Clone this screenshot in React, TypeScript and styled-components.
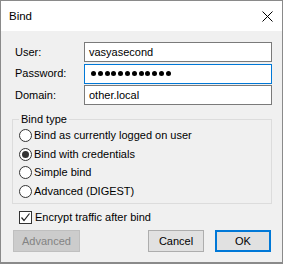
import React from "react";
import styled, { createGlobalStyle } from "styled-components";

const GlobalStyle = createGlobalStyle`
  html, body { margin: 0; padding: 0; background: #3b3f46; }
  * { box-sizing: border-box; }
`;

const FONT = `"Liberation Sans", "Noto Sans", Arial, sans-serif`;

const Window = styled.div`
  width: 283px;
  height: 264px;
  border: 1px solid #8a8a8a;
  border-bottom-width: 2px;
  background: #f0f0f0;
  display: flex;
  flex-direction: column;
  font-family: ${FONT};
  font-size: 11px;
  color: #000;
`;

const TitleBar = styled.div`
  height: 30px;
  background: #fff;
  display: flex;
  align-items: center;
  justify-content: space-between;
  padding: 0 9px 0 8px;
`;

const Title = styled.span`
  font-size: 11.5px;
  line-height: 15px;
`;

const Body = styled.div`
  flex: 1;
  display: flex;
  flex-direction: column;
  padding: 11px 10px 0 11px;
`;

const FormGrid = styled.div`
  display: grid;
  grid-template-columns: 72px 1fr;
  grid-auto-rows: 20px;
  row-gap: 1.5px;
  align-items: center;
`;

const Label = styled.span`
  padding-left: 3px;
  line-height: 15px;
`;

const Field = styled.div<{ $focused?: boolean }>`
  height: 20px;
  border: 1px solid ${(p) => (p.$focused ? "#0078d7" : "#7a7a7a")};
  background: #fff;
  display: flex;
  align-items: center;
  padding-left: 4px;
  line-height: 15px;
`;

const Dots = styled.span`
  display: flex;
  gap: 1.8px;
  padding-left: 2px;
`;

const Dot = styled.span`
  width: 5px;
  height: 5px;
  border-radius: 50%;
  background: #000;
`;

const GroupBox = styled.fieldset`
  margin: 10px 0 0 0;
  padding: 3px 0 2px 6px;
  border: 1px solid #dcdcdc;
  display: flex;
  flex-direction: column;
  min-width: 0;
`;

const Legend = styled.legend`
  padding: 0 2px;
  margin-left: 0px;
  height: 8px;
  line-height: 8px;
`;

const OptionRow = styled.label`
  display: flex;
  align-items: center;
  height: 18.75px;
  gap: 2px;
  line-height: 15px;
`;

const RadioCircle = styled.span<{ $checked?: boolean }>`
  width: 13px;
  height: 13px;
  border-radius: 50%;
  border: 1px solid #333;
  background: #fff;
  display: flex;
  align-items: center;
  justify-content: center;
  flex: none;
  &::after {
    content: "";
    width: 7px;
    height: 7px;
    border-radius: 50%;
    background: ${(p) => (p.$checked ? "#333" : "transparent")};
  }
`;

const CheckRow = styled.label`
  display: flex;
  align-items: center;
  gap: 3px;
  height: 13px;
  margin: 7px 0 0 7px;
  line-height: 15px;
`;

const CheckBox = styled.span`
  width: 13px;
  height: 13px;
  border: 1px solid #333;
  background: #fff;
  display: flex;
  align-items: center;
  justify-content: center;
  flex: none;
`;

const ButtonRow = styled.div`
  display: flex;
  align-items: center;
  margin-top: 6px;
  padding-left: 1px;
  padding-right: 1px;
`;

const Spacer = styled.div`
  flex: 1;
`;

const Button = styled.button<{ $default?: boolean; $width: number }>`
  width: ${(p) => p.$width}px;
  height: 22px;
  margin-left: ${(p) => (p.$default ? "11px" : "0")};
  font-family: ${FONT};
  font-size: 11px;
  line-height: 15px;
  color: #000;
  background: #e1e1e1;
  border: ${(p) => (p.$default ? "2px solid #0078d7" : "1px solid #adadad")};
  padding: 0;
  &:disabled {
    background: #cccccc;
    border-color: #bfbfbf;
    color: #838383;
  }
`;

export default function App() {
  return (
    <>
      <GlobalStyle />
      <Window>
        <TitleBar>
          <Title>Bind</Title>
          <svg width="11" height="11" viewBox="0 0 11 11">
            <path d="M0.5 0.5 L10.5 10.5 M10.5 0.5 L0.5 10.5" stroke="#000" strokeWidth="1" />
          </svg>
        </TitleBar>
        <Body>
          <FormGrid>
            <Label>User:</Label>
            <Field>vasyasecond</Field>
            <Label>Password:</Label>
            <Field $focused>
              <Dots>
                {Array.from({ length: 12 }).map((_, i) => (
                  <Dot key={i} />
                ))}
              </Dots>
            </Field>
            <Label>Domain:</Label>
            <Field>other.local</Field>
          </FormGrid>
          <GroupBox>
            <Legend>Bind type</Legend>
            <OptionRow>
              <RadioCircle />
              Bind as currently logged on user
            </OptionRow>
            <OptionRow>
              <RadioCircle $checked />
              Bind with credentials
            </OptionRow>
            <OptionRow>
              <RadioCircle />
              Simple bind
            </OptionRow>
            <OptionRow>
              <RadioCircle />
              Advanced (DIGEST)
            </OptionRow>
          </GroupBox>
          <CheckRow>
            <CheckBox>
              <svg width="11" height="11" viewBox="0 0 11 11">
                <path d="M1.5 5.5 L4 8.5 L9.5 1.5" fill="none" stroke="#222" strokeWidth="1.2" />
              </svg>
            </CheckBox>
            Encrypt traffic after bind
          </CheckRow>
          <ButtonRow>
            <Button $width={67} disabled>
              Advanced
            </Button>
            <Spacer />
            <Button $width={56}>Cancel</Button>
            <Button $width={56} $default>
              OK
            </Button>
          </ButtonRow>
        </Body>
      </Window>
    </>
  );
}
